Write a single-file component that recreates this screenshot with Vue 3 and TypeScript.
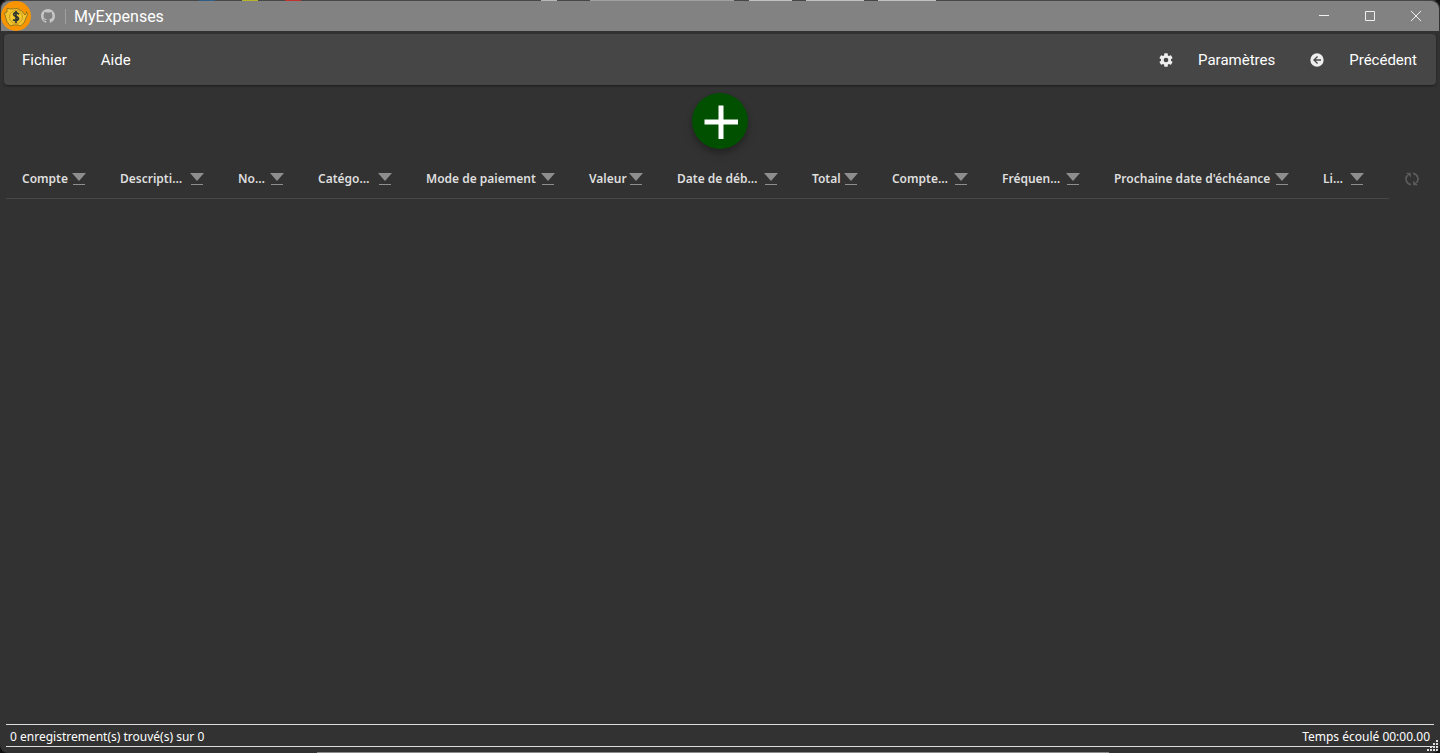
<script setup lang="ts">
import { ref } from 'vue'

interface Column {
  label: string
  span: number
}

const columns: Column[] = [
  { label: 'Compte', span: 98 },
  { label: 'Descripti…', span: 118 },
  { label: 'No…', span: 80 },
  { label: 'Catégo…', span: 108 },
  { label: 'Mode de paiement', span: 163 },
  { label: 'Valeur', span: 88 },
  { label: 'Date de déb…', span: 135 },
  { label: 'Total', span: 80 },
  { label: 'Compte…', span: 110 },
  { label: 'Fréquen…', span: 112 },
  { label: "Prochaine date d'échéance", span: 209 },
  { label: 'Li…', span: 82 },
]
const total = columns.reduce((sum, c) => sum + c.span, 0)
const found = ref(0)
const records = ref(0)
</script>

<template>
  <div class="window">
    <div class="desktop-edge"></div>
    <header class="titlebar">
      <svg class="coin" viewBox="0 0 30 30" aria-hidden="true">
        <circle cx="15" cy="15" r="15" fill="#f79400" />
        <path d="M6 7.500 11 8Q16 6 21 10L24 14Q26 13 25.500 10.500 28 13 25 17 24 22 19.500 25L17 24H12L9.500 25Q5 21 4.500 16L3.500 12 6 11Z" fill="#f2c42d" stroke="#94761f" stroke-width="1" />
        <circle cx="15" cy="16" r="6.500" fill="#f4c92d" stroke="#c79a22" stroke-width="1" />
        <path d="M18 13.300Q15 10.500 12.800 12.700C11.500 15.300 18 15.300 17.500 18Q16 20.700 12 18.700M15 10V22" fill="none" stroke="#2d3430" stroke-width="1.700" />
      </svg>
      <a class="github" href="#" aria-label="GitHub">
        <svg viewBox="0 0 16 16" width="14" height="14"><path fill="#c6c6c6" d="M8 0C3.580 0 0 3.580 0 8c0 3.540 2.290 6.530 5.470 7.590.4.070.55-.17.55-.38 0-.19-.01-.82-.01-1.490-2.010.37-2.530-.49-2.690-.94-.09-.23-.48-.94-.82-1.130-.28-.15-.68-.52-.01-.53.63-.01 1.080.58 1.230.82.72 1.210 1.870.87 2.330.66.070-.52.28-.87.51-1.070-1.780-.2-3.640-.89-3.640-3.950 0-.87.31-1.590.82-2.150-.08-.2-.36-1.020.08-2.120 0 0 .67-.21 2.200.82a7.600 7.600 0 0 1 4 0c1.530-1.040 2.200-.82 2.200-.82.44 1.100.16 1.920.08 2.120.51.56.82 1.270.82 2.150 0 3.070-1.870 3.750-3.650 3.950.29.25.54.73.54 1.480 0 1.070-.01 1.930-.01 2.200 0 .21.15.46.55.38A8 8 0 0 0 16 8c0-4.420-3.580-8-8-8Z" /></svg>
      </a>
      <span class="divider"></span>
      <span class="title">MyExpenses</span>
      <div class="controls">
        <button type="button" aria-label="Réduire"><svg width="12" height="12" viewBox="0 0 12 12"><path d="M1 5.500H11" /></svg></button>
        <button type="button" aria-label="Agrandir"><svg width="12" height="12" viewBox="0 0 12 12"><path d="M1.500 1.500H10.500V10.500H1.500Z" /></svg></button>
        <button type="button" aria-label="Fermer"><svg width="12" height="12" viewBox="0 0 12 12"><path d="M1 1 11 11M11 1 1 11" /></svg></button>
      </div>
    </header>

    <nav class="menubar">
      <button type="button">Fichier</button>
      <button type="button">Aide</button>
      <span class="spacer"></span>
      <button type="button" class="with-icon">
        <svg width="16" height="16" viewBox="0 0 24 24"><path fill="#eee" d="M12 15.500A3.500 3.500 0 0 1 8.500 12 3.500 3.500 0 0 1 12 8.500a3.500 3.500 0 0 1 3.500 3.500 3.500 3.500 0 0 1-3.500 3.500m7.430-2.530c.04-.32.07-.64.07-.97s-.03-.66-.07-1l2.110-1.630c.19-.15.24-.42.12-.64l-2-3.460c-.12-.22-.39-.31-.61-.22l-2.490 1c-.52-.39-1.060-.73-1.690-.98l-.37-2.650A.5.500 0 0 0 14 2h-4c-.25 0-.46.18-.5.42l-.37 2.650c-.63.25-1.170.59-1.690.98l-2.490-1c-.22-.09-.49 0-.61.22l-2 3.460c-.13.22-.07.49.12.64L4.570 11c-.04.34-.07.67-.07 1s.03.65.07.97l-2.110 1.660c-.19.15-.25.42-.12.64l2 3.460c.12.22.39.3.61.22l2.490-1.010c.52.4 1.060.74 1.690.99l.37 2.650c.04.24.25.42.5.42h4c.25 0 .46-.18.5-.42l.37-2.650c.63-.26 1.170-.59 1.690-.99l2.490 1.010c.22.08.49 0 .61-.22l2-3.460c.12-.22.07-.49-.12-.64z" /></svg>
        <span>Paramètres</span>
      </button>
      <button type="button" class="with-icon">
        <svg width="16" height="16" viewBox="0 0 24 24"><path fill="#eee" d="M2 12A10 10 0 0 1 12 2a10 10 0 0 1 10 10 10 10 0 0 1-10 10A10 10 0 0 1 2 12m16-1h-8l3.500-3.500-1.420-1.420L6.160 12l5.920 5.920 1.420-1.420L10 13h8z" /></svg>
        <span>Précédent</span>
      </button>
    </nav>

    <main class="content">
      <button type="button" class="add" aria-label="Ajouter">
        <svg width="56" height="56" viewBox="0 0 56 56"><path d="M29 12.500V46M12.500 29H46" stroke="#fff" stroke-width="5" /></svg>
      </button>
      <div class="grid-head">
        <table>
          <colgroup>
            <col v-for="(c, i) in columns" :key="i" :style="{ width: (c.span / total) * 100 + '%' }" />
          </colgroup>
          <thead>
            <tr>
              <th v-for="(c, i) in columns" :key="i" scope="col">
                <div class="cell">
                  <span>{{ c.label }}</span>
                  <button type="button" :aria-label="'Filtrer ' + c.label">
                    <svg width="14" height="13" viewBox="0 0 14 13"><path d="M0 0H14L7 8Z" fill="#8e8e8e" /><path d="M1 11.500H13" stroke="#8e8e8e" /></svg>
                  </button>
                </div>
              </th>
            </tr>
          </thead>
        </table>
        <button type="button" class="refresh" aria-label="Actualiser">
          <svg width="14" height="14" viewBox="0 0 14 14"><path d="M6 12.600A5.600 5.600 0 0 1 2.600 3.200M8 1.400A5.600 5.600 0 0 1 11.400 10.800" fill="none" stroke="#5b5b5b" stroke-width="1.700" /><path d="M1 .8H5.800V5.600ZM13 13.200H8.200V8.400Z" fill="#5b5b5b" /></svg>
        </button>
      </div>
    </main>

    <footer class="status">
      <span>{{ found }} enregistrement(s) trouvé(s) sur {{ records }}</span>
      <span>Temps écoulé 00:00.00</span>
    </footer>
    <svg class="grip" width="11" height="11" viewBox="0 0 11 11" aria-hidden="true"><path fill="#ddd" d="M9 0h2v2H9zM6 3h2v2H6zM9 3h2v2H9zM3 6h2v2H3zM6 6h2v2H6zM9 6h2v2H9zM0 9h2v2H0zM3 9h2v2H3zM6 9h2v2H6zM9 9h2v2H9z" /></svg>
    <div class="bottom-edge"></div>
  </div>
</template>

<style>
body {
  margin: 0;
  background: #111;
}
</style>

<style scoped>
.window {
  position: relative;
  box-sizing: border-box;
  display: flex;
  flex-direction: column;
  min-height: 100vh;
  background: #323232;
  border-radius: 8px;
  overflow: hidden;
  color: #fff;
  font-family: Roboto, "Liberation Sans", sans-serif;
}
button {
  margin: 0;
  padding: 0;
  border: 0;
  background: none;
  color: inherit;
  font: inherit;
}
svg {
  display: block;
}
.desktop-edge {
  height: 1px;
  background:
    linear-gradient(#2f5f86, #2f5f86) 14% 0 / 16px 1px no-repeat,
    linear-gradient(#b5b52c, #b5b52c) 17% 0 / 16px 1px no-repeat,
    linear-gradient(#c23030, #c23030) 20% 0 / 16px 1px no-repeat,
    linear-gradient(#b8b8b8, #b8b8b8) 38% 0 / 16px 1px no-repeat,
    linear-gradient(90deg, transparent 41%, #a0a0a0 41%, #a0a0a0 51%, transparent 51%),
    linear-gradient(90deg, transparent 52%, #c0c0c0 52%, #c0c0c0 55%, transparent 55%),
    linear-gradient(90deg, transparent 56%, #c0c0c0 56%, #c0c0c0 60%, transparent 60%),
    linear-gradient(90deg, transparent 61%, #c0c0c0 61%, #c0c0c0 65%, transparent 65%),
    #474747;
}
.titlebar {
  display: flex;
  align-items: center;
  height: 30px;
  margin: 0 1px;
  border-radius: 8px 8px 0 0;
  background: #828282;
}
.coin {
  width: 30px;
  height: 30px;
}
.github {
  margin-left: 10px;
}
.divider {
  width: 1px;
  height: 15px;
  margin: 0 8px 0 10px;
  background: #a0a0a0;
}
.title {
  font-size: 16px;
}
.controls {
  display: flex;
  margin-left: auto;
}
.controls button {
  display: grid;
  place-items: center;
  width: 46px;
  height: 30px;
}
.controls path {
  fill: none;
  stroke: #f0f0f0;
}
.menubar {
  display: flex;
  align-items: center;
  gap: 34px;
  height: 51px;
  margin: 3px 4px 0;
  padding: 0 19px 0 18px;
  border-radius: 4px;
  background: #464646;
  box-shadow: 0 1px 2px #1c1c1c;
  box-sizing: border-box;
  font-size: 15px;
}
.spacer {
  flex: 1;
}
.with-icon {
  display: flex;
  align-items: center;
  gap: 24px;
}
.content {
  flex: 1;
}
.add {
  display: grid;
  place-items: center;
  width: 56px;
  height: 56px;
  margin: 8px auto;
  border-radius: 50%;
  background: #005000;
  box-shadow: 0 3px 5px rgba(0, 0, 0, 0.2), 0 6px 10px rgba(0, 0, 0, 0.14);
}
.grid-head {
  display: flex;
  align-items: center;
  margin: 0 6px;
  font-family: "Noto Sans", "Open Sans", sans-serif;
  font-size: 12px;
  color: #dedede;
}
table {
  flex: 1;
  width: 0;
  table-layout: fixed;
  border-collapse: collapse;
}
th {
  height: 39px;
  padding: 2px 18px 0 16px;
  border-bottom: 1px solid #484848;
  text-align: left;
  font-weight: 600;
}
th:last-child {
  padding-right: 25px;
}
.cell {
  display: flex;
  align-items: center;
  justify-content: space-between;
  white-space: nowrap;
}
.cell button {
  padding-top: 2px;
}
.refresh {
  display: grid;
  place-items: center;
  width: 45px;
  padding-top: 2px;
}
.status {
  display: flex;
  align-items: center;
  justify-content: space-between;
  height: 20px;
  margin: 0 6px 6px;
  padding: 1px 4px 0;
  border-top: 1px solid #ddd;
  border-bottom: 1px solid #ddd;
  font-family: "Noto Sans", "Open Sans", sans-serif;
  font-size: 12px;
}
.grip {
  position: absolute;
  right: 2px;
  bottom: 2px;
}
.bottom-edge {
  position: absolute;
  left: 22%;
  right: 23%;
  bottom: 0;
  height: 1px;
  background: #8c8c8c;
}
</style>
